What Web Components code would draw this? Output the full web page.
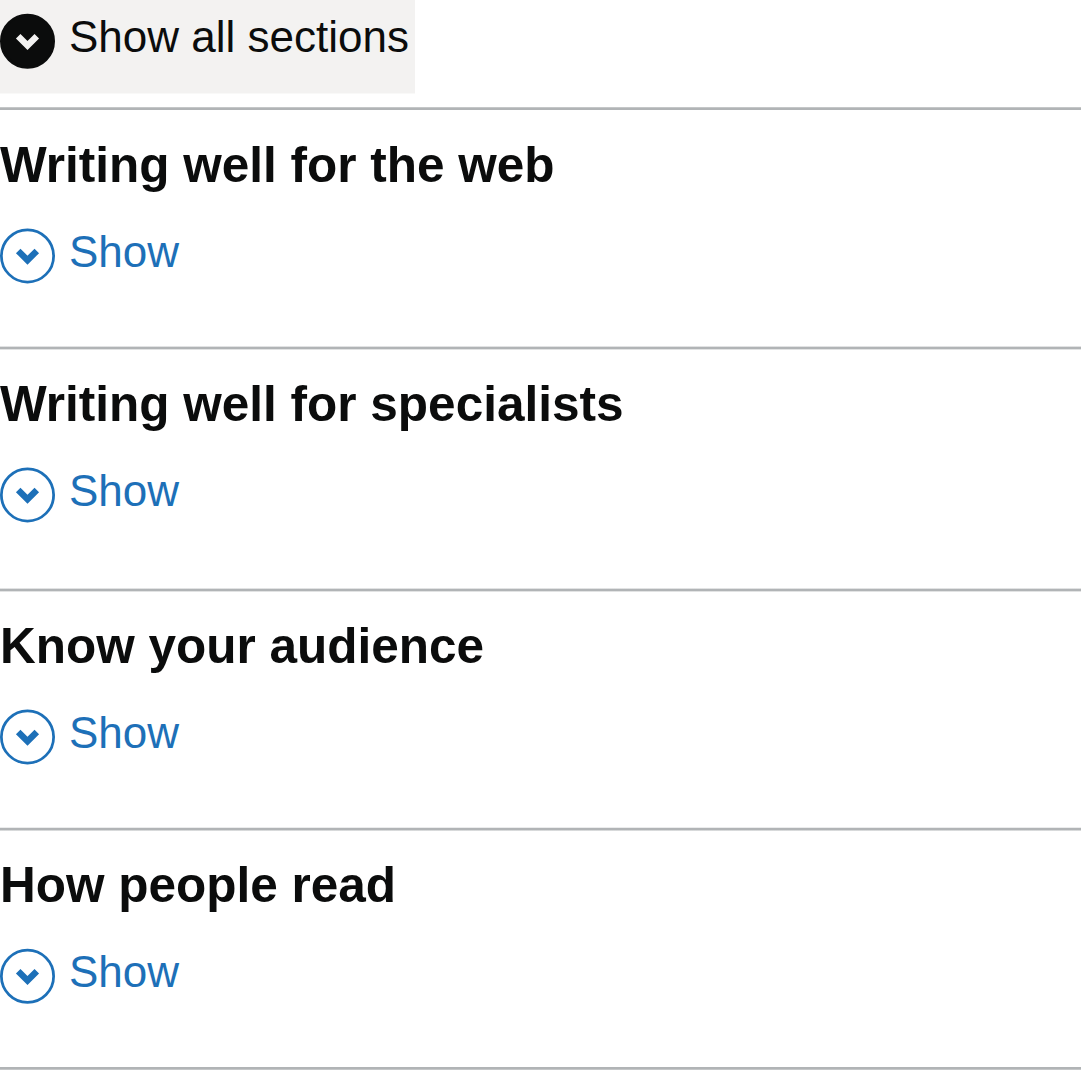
<!DOCTYPE html>
<html lang="en">
<head>
<meta charset="utf-8">
<title>Accordion</title>
<style>
html, body { margin: 0; background: #fff; }
body { font-family: "Liberation Sans", Arial, sans-serif; color: #0b0c0c; overflow: hidden; }
</style>
</head>
<body>
<guide-accordion>
  <accordion-section style="--height:239px; --before:.75; --after:0">Writing well for the web</accordion-section>
  <accordion-section style="--height:242px">Writing well for specialists</accordion-section>
  <accordion-section style="--height:239px">Know your audience</accordion-section>
  <accordion-section style="--height:239px; --before:.25; --after:.5; --icon-shift:.7px">How people read</accordion-section>
</guide-accordion>
<script>
class ChevronIcon extends HTMLElement {
  constructor() {
    super();
    this.attachShadow({ mode: 'open' }).innerHTML = `
      <style>
        :host { display: block; width: 55px; height: 55px; flex: none; }
        svg { display: block; overflow: visible; }
        g { transform: translateY(var(--icon-shift, .4px)); }
        circle { fill: var(--icon-fill, none); stroke: currentColor; stroke-width: 2.75; }
        path { fill: none; stroke: var(--icon-mark, currentColor); stroke-width: 6.4; }
      </style>
      <svg width="55" height="55" viewBox="0 0 55 55" aria-hidden="true">
        <g>
          <circle cx="27.5" cy="27.5" r="26.125"/>
          <path d="M18.2 22.5L27.5 31.8L36.8 22.5"/>
        </g>
      </svg>`;
  }
}
customElements.define('chevron-icon', ChevronIcon);

class SectionRule extends HTMLElement {
  constructor() {
    super();
    this.attachShadow({ mode: 'open' }).innerHTML = `
      <style>
        :host {
          display: block; height: 4px; flex: none;
          background: linear-gradient(
            rgb(177 180 182 / var(--before, .375)) 1px,
            #b1b4b6 1px 3px,
            rgb(177 180 182 / var(--after, .375)) 3px);
        }
      </style>`;
  }
}
customElements.define('section-rule', SectionRule);

class SectionToggle extends HTMLElement {
  constructor() {
    super();
    this.attachShadow({ mode: 'open' }).innerHTML = `
      <style>
        :host { display: flex; }
        button { display: flex; align-items: flex-start; gap: 14px; margin: 0; padding: 0; border: 0; background: none; color: #1d70b8; font: 44px/55px "Liberation Sans", Arial, sans-serif; white-space: nowrap; cursor: pointer; }
        span { margin-top: -4px; }
        :host([all]) { --icon-shift: .7px; }
        :host([all]) button { height: 94px; width: 415px; padding-top: 13px; background: linear-gradient(#f3f2f1 93px, #f9f9f8 93px); color: #0b0c0c; box-sizing: border-box; }
        :host([all]) chevron-icon { --icon-fill: #0b0c0c; --icon-mark: #f3f2f1; }
      </style>
      <button type="button"><chevron-icon></chevron-icon><span><slot></slot></span></button>`;
  }
}
customElements.define('section-toggle', SectionToggle);

class AccordionSection extends HTMLElement {
  constructor() {
    super();
    this.attachShadow({ mode: 'open' }).innerHTML = `
      <style>
        :host { display: flex; flex-direction: column; box-sizing: border-box; height: var(--height); }
        h2 { margin: 26px 0 36px; font: bold 49.5px/55px "Liberation Sans", Arial, sans-serif; white-space: nowrap; }
      </style>
      <section-rule></section-rule>
      <h2><slot></slot></h2>
      <section-toggle>Show</section-toggle>`;
  }
}
customElements.define('accordion-section', AccordionSection);

class GuideAccordion extends HTMLElement {
  constructor() {
    super();
    this.attachShadow({ mode: 'open' }).innerHTML = `
      <style>
        :host { display: flex; flex-direction: column; height: 1073px; overflow: hidden; }
        section-toggle { height: 107px; flex: none; }
        ::slotted(*) { flex: none; }
        .end { --before: 0; --after: .75; }
      </style>
      <section-toggle all>Show all sections</section-toggle>
      <slot></slot>
      <section-rule class="end"></section-rule>`;
  }
}
customElements.define('guide-accordion', GuideAccordion);
</script>
</body>
</html>
